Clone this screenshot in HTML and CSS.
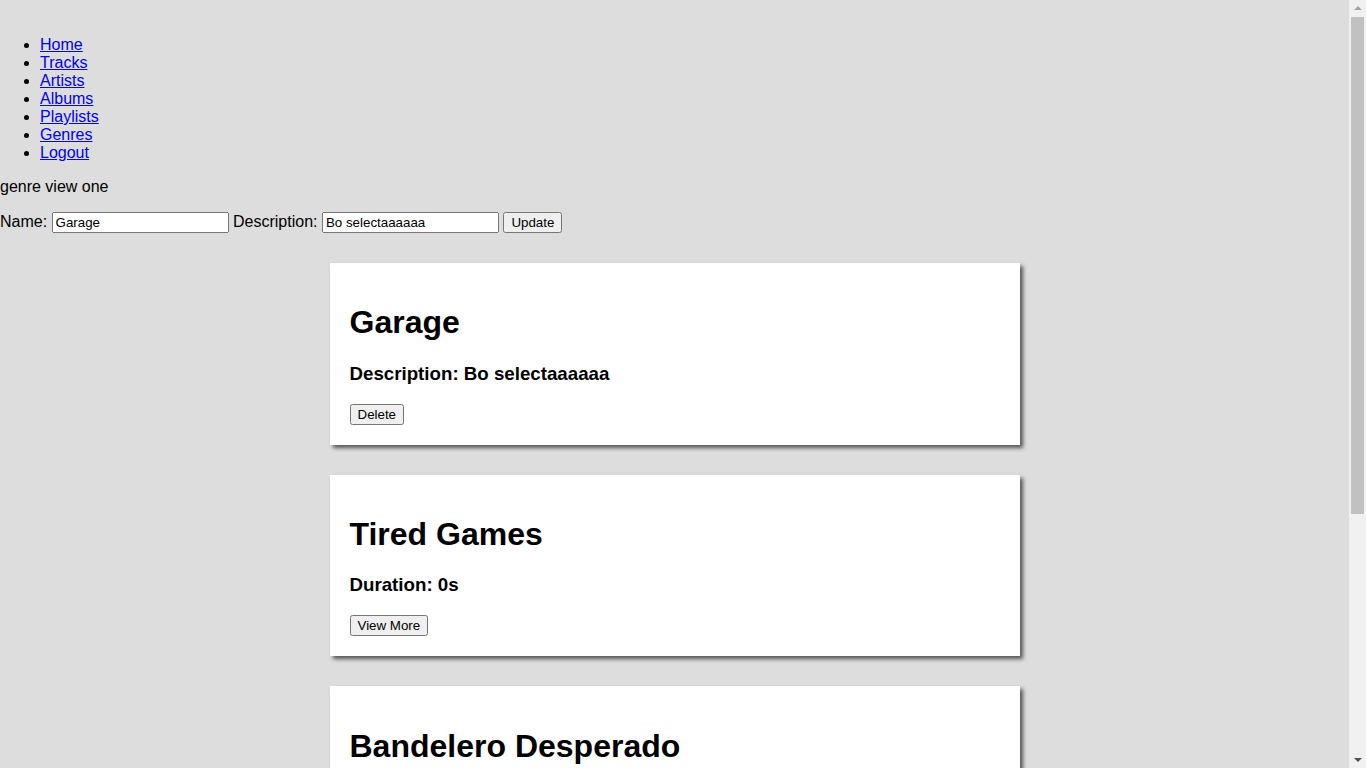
FILE: index.html
```html
<!DOCTYPE html>
<html>
<head>
<meta charset="utf-8">
<link rel="stylesheet" href="styles.css">
</head>
<body>
<main class="page">
<nav class="nav">
  <ul class="nav-list">
    <li><a href="#">Home</a></li>
    <li><a href="#">Tracks</a></li>
    <li><a href="#">Artists</a></li>
    <li><a href="#">Albums</a></li>
    <li><a href="#">Playlists</a></li>
    <li><a href="#">Genres</a></li>
    <li><a href="#">Logout</a></li>
  </ul>
</nav>
<p class="title">genre view one</p>
<form class="edit-form">
  <label>Name: <input class="field" type="text" value="Garage"></label>
  <label>Description: <input class="field" type="text" value="Bo selectaaaaaa"></label>
  <button class="btn" type="button">Update</button>
</form>
<div class="cards">
  <div class="card">
    <h1 class="card-title">Garage</h1>
    <h3 class="card-sub">Description: Bo selectaaaaaa</h3>
    <button class="btn" type="button">Delete</button>
  </div>
  <div class="card">
    <h1 class="card-title">Tired Games</h1>
    <h3 class="card-sub">Duration: 0s</h3>
    <button class="btn" type="button">View More</button>
  </div>
  <div class="card">
    <h1 class="card-title">Bandelero Desperado</h1>
    <h3 class="card-sub">Duration: 0s</h3>
    <button class="btn" type="button">View More</button>
  </div>
</div>
</main>
<div class="scrollbar" aria-hidden="true">
  <span class="arrow arrow-up"></span>
  <span class="thumb"></span>
  <span class="arrow arrow-down"></span>
</div>
</body>
</html>
```
FILE: styles.css
```css
html, body {
  margin: 0;
  height: 100%;
  overflow: hidden;
  background: #dddddd;
}
body {
  font-family: "Liberation Sans", Arial, sans-serif;
  font-size: 16px;
  color: #000;
}
.page {
  margin-right: 17px;
}
.nav {
  padding-top: 20px;
}
.nav-list {
  margin: 16px 0;
  padding-left: 40px;
}
.nav-list a {
  color: #0000ee;
}
.title {
  margin: 16px 0;
}
.edit-form {
  margin: 0;
}
.field {
  width: 177px;
  box-sizing: border-box;
  font-family: "Liberation Sans", Arial, sans-serif;
  font-size: 13.333px;
}
.btn {
  font-family: "Liberation Sans", Arial, sans-serif;
  font-size: 13.333px;
}
.cards {
  padding-top: 30px;
}
.card {
  width: 650px;
  margin: 0 auto 30px;
  padding: 20px;
  background: #fff;
  box-shadow: 3px 3px 4px #555;
}
.card-title {
  font-size: 32px;
  margin: 21.44px 0;
}
.card-sub {
  font-size: 18.72px;
  margin: 18.72px 0;
}
.scrollbar {
  position: fixed;
  top: 0;
  right: 0;
  width: 17px;
  height: 100%;
  background: #f1f1f1;
  display: flex;
  flex-direction: column;
  align-items: center;
}
.arrow {
  width: 0;
  height: 0;
  border-left: 4px solid transparent;
  border-right: 4px solid transparent;
}
.arrow-up {
  margin-top: 6px;
  border-bottom: 4px solid #a3a3a3;
}
.arrow-down {
  margin-top: auto;
  margin-bottom: 6px;
  border-top: 4px solid #505050;
}
.thumb {
  display: block;
  width: 13px;
  height: 497px;
  margin-top: 7px;
  background: #c1c1c1;
}
```
